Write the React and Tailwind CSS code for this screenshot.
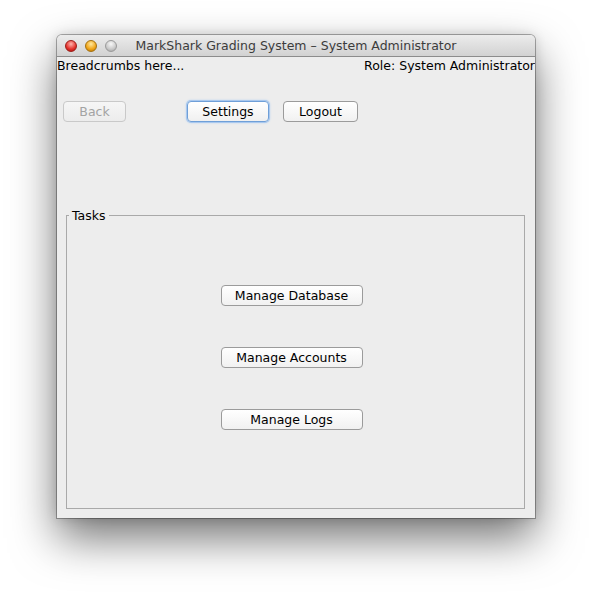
const font = { fontFamily: '"DejaVu Sans", "Lucida Grande", sans-serif' };

function AquaButton({ label, className = '', disabled = false, focused = false }) {
  const base =
    'h-[21px] pt-[1px] rounded-[4px] text-[12.5px] leading-none flex items-center justify-center bg-gradient-to-b';
  if (disabled) {
    return (
      <div
        className={`${base} from-[#f6f6f6] to-[#ececec] border border-[#c9c9c9] text-[#a3a3a3] ${className}`}
      >
        {label}
      </div>
    );
  }
  if (focused) {
    return (
      <div
        className={`${base} from-[#ffffff] to-[#f0f0f0] border border-[#6f9fd8] shadow-[0_0_0_1px_#a9c8ee,0_0_2px_1px_#b9d4f3] text-black ${className}`}
      >
        {label}
      </div>
    );
  }
  return (
    <div
      className={`${base} from-[#ffffff] to-[#f1f1f1] border border-[#9b9b9b] text-black ${className}`}
    >
      {label}
    </div>
  );
}

export default function App() {
  return (
    <div className="w-[592px] h-[597px] bg-white pl-[57px] pt-[35px] overflow-hidden" style={font}>
      <div className="w-[478px] h-[483px] flex flex-col rounded-t-[5px] bg-[#ededed] shadow-[0_0_0_1px_rgba(0,0,0,0.3),0_20px_45px_rgba(0,0,0,0.55),0_0_12px_rgba(0,0,0,0.15)] overflow-hidden">
        {/* title bar */}
        <div className="h-[22px] shrink-0 flex items-center bg-gradient-to-b from-[#ececec] to-[#d2d2d2] border-b border-[#8c8c8c]">
          <div className="w-[60px] pl-[8px] flex items-center gap-[8px]">
            <span className="w-[12px] h-[12px] rounded-full bg-[radial-gradient(circle_at_50%_30%,#ffb3ad,#e3302a_60%,#a4100c)] border border-[#9b1c17]" />
            <span className="w-[12px] h-[12px] rounded-full bg-[radial-gradient(circle_at_50%_30%,#ffe9a0,#f0a417_60%,#b06d05)] border border-[#a3700f]" />
            <span className="w-[12px] h-[12px] rounded-full bg-[radial-gradient(circle_at_50%_30%,#f8f8f8,#c9c9c9_60%,#9b9b9b)] border border-[#9a9a9a]" />
          </div>
          <div className="flex-1 text-center text-[12.5px] text-[#3c3c3c] leading-none pt-[1px]">
            MarkShark Grading System – System Administrator
          </div>
          <div className="w-[60px]" />
        </div>

        {/* header */}
        <div className="flex justify-between text-[12.5px] text-black leading-[16px] pt-[1px]">
          <span>Breadcrumbs here...</span>
          <span className="whitespace-nowrap">Role: System Administrator</span>
        </div>

        {/* nav buttons */}
        <div className="flex mt-[27px] pl-[6px]">
          <AquaButton label="Back" disabled className="w-[63px]" />
          <AquaButton label="Settings" focused className="w-[82px] ml-[61px]" />
          <AquaButton label="Logout" className="w-[75px] ml-[14px]" />
        </div>

        {/* tasks group */}
        <div className="relative flex-1 mt-[93px] ml-[9px] mr-[10px] mb-[9px] border border-[#a9a9a9] flex flex-col items-center pr-[8px] pt-[69px] gap-[41px]">
          <span className="absolute -top-[8px] left-[2px] bg-[#ededed] px-[3px] text-[12.5px] leading-[16px] text-black">
            Tasks
          </span>
          <AquaButton label="Manage Database" className="w-[142px]" />
          <AquaButton label="Manage Accounts" className="w-[142px]" />
          <AquaButton label="Manage Logs" className="w-[142px]" />
        </div>
      </div>
    </div>
  );
}
